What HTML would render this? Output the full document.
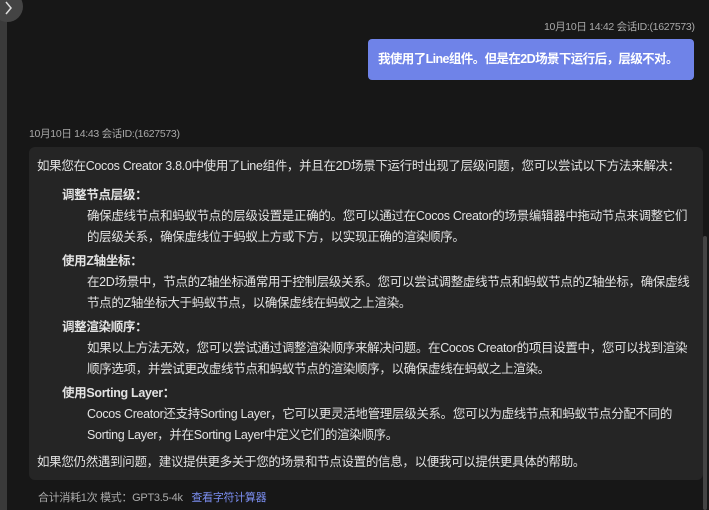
<!DOCTYPE html>
<html><head><meta charset="utf-8"><style>
*{margin:0;padding:0;box-sizing:border-box}
body{width:709px;height:510px;background:#171717;overflow:hidden;position:relative;font-family:"Liberation Sans","Noto Sans CJK SC",sans-serif;color:#e6e6e6}
.lbar{position:absolute;left:0;top:0;width:7px;height:510px;background:#3a3a3a}
.tog{position:absolute;left:-8px;top:-9px;width:31px;height:31px;border-radius:50%;background:#444}
.ts{position:absolute;font-size:10.5px;color:#aaa;letter-spacing:-0.3px}
.ub{position:absolute;left:368px;top:39px;width:326px;height:41px;background:#6f83e8;border-radius:4px;color:#fff;font-size:12.5px;font-weight:bold;line-height:41px;padding-left:10px;white-space:nowrap;letter-spacing:-0.6px}
.bb{position:absolute;left:29px;top:147px;width:674px;height:333px;background:#252525;border-radius:6px;font-size:12.5px;line-height:21px;color:#e2e2e2;letter-spacing:-0.32px}
.l{position:absolute;white-space:nowrap}
.h{font-weight:bold;left:33px}
.b{left:58px}
.sb{position:absolute;left:703px;top:236px;width:4px;height:274px;background:#444;border-radius:2px}
.ft{position:absolute;left:38px;top:489px;font-size:11px;color:#aaa;letter-spacing:-0.3px}
.ft span{color:#7b8ef0;margin-left:6px}
</style></head><body>
<div class="lbar"></div><div class="tog"><svg width="31" height="31"><path d="M14 11 L19 17 L14 23" stroke="#ddd" stroke-width="1.5" fill="none"/></svg></div>
<div class="ts" style="left:544px;top:19px">10月10日 14:42 会话ID:(1627573)</div>
<div class="ub">我使用了Line组件。但是在2D场景下运行后，层级不对。</div>
<div class="ts" style="left:29px;top:126px">10月10日 14:43 会话ID:(1627573)</div>
<div class="bb">
<div class="l" style="left:8px;top:9px">如果您在Cocos Creator 3.8.0中使用了Line组件，并且在2D场景下运行时出现了层级问题，您可以尝试以下方法来解决：</div>
<div class="l h" style="top:38px">调整节点层级：</div>
<div class="l b" style="top:59px">确保虚线节点和蚂蚁节点的层级设置是正确的。您可以通过在Cocos Creator的场景编辑器中拖动节点来调整它们</div>
<div class="l b" style="top:80px">的层级关系，确保虚线位于蚂蚁上方或下方，以实现正确的渲染顺序。</div>
<div class="l h" style="top:104px">使用Z轴坐标：</div>
<div class="l b" style="top:125px">在2D场景中，节点的Z轴坐标通常用于控制层级关系。您可以尝试调整虚线节点和蚂蚁节点的Z轴坐标，确保虚线</div>
<div class="l b" style="top:146px">节点的Z轴坐标大于蚂蚁节点，以确保虚线在蚂蚁之上渲染。</div>
<div class="l h" style="top:170px">调整渲染顺序：</div>
<div class="l b" style="top:191px">如果以上方法无效，您可以尝试通过调整渲染顺序来解决问题。在Cocos Creator的项目设置中，您可以找到渲染</div>
<div class="l b" style="top:212px">顺序选项，并尝试更改虚线节点和蚂蚁节点的渲染顺序，以确保虚线在蚂蚁之上渲染。</div>
<div class="l h" style="top:236px">使用Sorting Layer：</div>
<div class="l b" style="top:257px">Cocos Creator还支持Sorting Layer，它可以更灵活地管理层级关系。您可以为虚线节点和蚂蚁节点分配不同的</div>
<div class="l b" style="top:278px">Sorting Layer，并在Sorting Layer中定义它们的渲染顺序。</div>
<div class="l" style="left:8px;top:305px">如果您仍然遇到问题，建议提供更多关于您的场景和节点设置的信息，以便我可以提供更具体的帮助。</div>
</div>
<div class="sb"></div>
<div class="ft">合计消耗1次 模式：GPT3.5-4k <span>查看字符计算器</span></div>
</body></html>
